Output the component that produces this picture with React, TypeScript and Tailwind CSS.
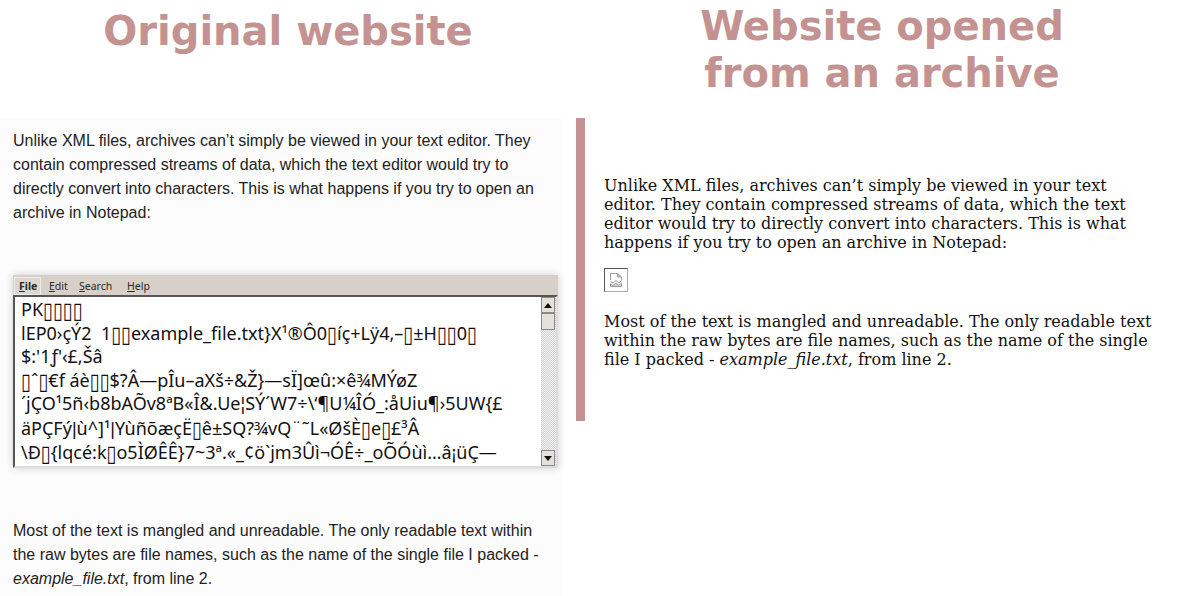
const SANS = { fontFamily: '"Liberation Sans", Arial, sans-serif' };
const TITLE = { fontFamily: '"DejaVu Sans", sans-serif' };

const NOTEPAD_LINES = [
  'PK\u25af\u25af\u25af\u25af',
  'lEP0\u203a\u00e7\u00dd2\u00a0\u00a01\u25af\u25afexample_file.txt}X\u00b9\u00ae\u00d40\u25af\u00ed\u00e7+L\u00ff4,\u2013\u25af\u00b1H\u25af\u25af0\u25af',
  '$:\'1\u0192\'\u2039\u00a3,\u0160\u00e2',
  '\u25af\u02c6\u25af\u20acf \u00e1\u00e8\u25af\u25af$?\u00c2\u2014p\u00ceu\u2013aX\u0161\u00f7&\u017d}\u2014s\u00cf]\u0153\u00fb:\u00d7\u00ea\u00beM\u00dd\u00f8Z',
  '\u00b4j\u00c7O\u00b95\u00f1\u2039b8bA\u00d5v8\u00aaB\u00ab\u00ce&.Ue\u00a6S\u00dd\u00b4W7\u00f7\\\u2018\u00b6U\u00bc\u00ce\u00d3_:\u00e5Uiu\u00b6\u203a5UW{\u00a3',
  '\u00e4P\u00c7F\u00fd|\u00f9^]\u00b9|Y\u00f9\u00f1\u00f5\u00e6\u00e7\u00cb\u25af\u00ea\u00b1SQ?\u00bevQ\u00a8\u02dcL\u00ab\u00d8\u0161\u00c8\u25afe\u25af\u00a3\u00b3\u00c2',
  '\\\u00d0\u25af{lqc\u00e9:k\u25afo5\u00cc\u00d8\u00ca\u00ca}7~3\u00aa.\u00ab_\u00a2\u00f6`jm3\u00db\u00ec\u00ac\u00d3\u00ca\u00f7_o\u00d5\u00d3\u00f9\u00ec\u2026\u00e2\u00a1\u00fc\u00c7\u2014',
];

// the missing-glyph boxes and the bars are too wide in Noto Sans, so they get their own font
function NotepadLine({ text }: { text: string }) {
  const parts = text.split(/([\u25af|\u00a6])/);
  return (
    <div>
      {parts.map((part, i) => {
        if (part === '\u25af') {
          return (
            <span key={i} className="inline-block origin-bottom scale-y-125 text-[18px] leading-[0]" style={TITLE}>
              {part}
            </span>
          );
        }
        if (part === '|' || part === '\u00a6') {
          return (
            <span key={i} style={SANS}>
              {part}
            </span>
          );
        }
        return <span key={i}>{part}</span>;
      })}
    </div>
  );
}

function ScrollArrow({ up }: { up?: boolean }) {
  return (
    <div className="flex h-[16px] w-[14px] items-center justify-center border border-[#8a8a8a] bg-[#e4e0da]">
      <svg width="8" height="5" viewBox="0 0 8 5">
        <path d={up ? 'M0 5 L4 0 L8 5 Z' : 'M0 0 L8 0 L4 5 Z'} fill="#111" />
      </svg>
    </div>
  );
}

function MenuItem({ label, className }: { label: string; className?: string }) {
  return (
    <span className={className}>
      <span className="underline underline-offset-1">{label[0]}</span>
      {label.slice(1)}
    </span>
  );
}

function Notepad() {
  return (
    <div className="ml-[13px] w-[545px] shadow-[0_0_8px_rgba(0,0,0,0.18)]">
      <div className="flex h-[20px] items-end bg-[#d6d0c9] pl-[1px] text-[10.5px] leading-[18px] text-[#2a2a2a]" style={{ fontFamily: '"Noto Sans", sans-serif' }}>
        <MenuItem label="File" className="h-[18px] w-[27px] border border-[#efece8] bg-[#dcd7d0] pl-[4px] font-bold leading-[16px]" />
        <MenuItem label="Edit" className="ml-[8px] h-[18px] w-[30px]" />
        <MenuItem label="Search" className="h-[18px] w-[48px]" />
        <MenuItem label="Help" className="h-[18px]" />
      </div>
      <div className="flex h-[173px] border-2 border-[#555] border-r-[#ddd] border-b-[#ddd] bg-white">
        <div className="flex-1 overflow-hidden pt-[1px] pl-[6px] text-[18px] leading-[23.5px] whitespace-nowrap text-[#111]" style={{ fontFamily: '"Noto Sans", "DejaVu Sans", sans-serif' }}>
          {NOTEPAD_LINES.map((line) => (
            <NotepadLine key={line} text={line} />
          ))}
        </div>
        <div className="flex w-[15px] flex-col bg-[repeating-conic-gradient(#d2d2d2_0_25%,#f4f4f4_0_50%)] bg-[length:2px_2px]">
          <ScrollArrow up />
          <div className="h-[17px] w-[14px] border border-[#8a8a8a] bg-[#e4e0da]" />
          <div className="flex-1" />
          <ScrollArrow />
        </div>
      </div>
    </div>
  );
}

function BrokenImage() {
  return (
    <div className="flex h-[24px] w-[24px] items-center justify-center border border-t-[#555] border-r-[#aaa] border-b-[#aaa] border-l-[#555]">
      <svg width="14" height="16" viewBox="0 0 14 16" fill="none" stroke="#a0a0a0" strokeWidth="1">
        <path d="M1.5 8 V1.5 H8.5 L12.5 5 V8" />
        <path d="M8.5 1.5 V5 H12.5" fill="#b8b8b8" />
        <path d="M1.5 9.5 L4 11 L7 8.5 L10 11 L12.5 8.5" />
        <path d="M1.5 12 L4 13.5 L7 11 L10 13.5 L12.5 11 V14.5 H1.5 Z" fill="#d0d0d0" />
      </svg>
    </div>
  );
}

export default function App() {
  return (
    <div className="flex h-[596px] w-[1200px] overflow-hidden bg-white">
      <div className="w-[576px] shrink-0">
        <h1 className="h-[118px] pt-[8px] text-center text-[40px] leading-[47px] font-bold text-[#c49391]" style={TITLE}>
          Original website
        </h1>
        <div className="h-[478px] w-[563px] bg-[#fcfcfc] text-[16px] leading-[24px] text-[#222]" style={SANS}>
          <p className="px-[13px] pt-[11px]">
            Unlike XML files, archives can’t simply be viewed in your text editor. They contain compressed streams of data, which the text editor would try to directly convert into characters. This is what happens if you try to open an archive in Notepad:
          </p>
          <div className="mt-[50px]">
            <Notepad />
          </div>
          <p className="mt-[51px] px-[13px]">
            Most of the text is mangled and unreadable. The only readable text within the raw bytes are file names, such as the name of the single file I packed - <em>example_file.txt</em>, from line 2.
          </p>
        </div>
      </div>
      <div className="flex-1">
        <h1 className="h-[118px] pt-[3px] pr-[12px] text-center text-[40px] leading-[47px] font-bold text-[#c49391]" style={TITLE}>
          Website opened
          <br />
          from an archive
        </h1>
        <div className="h-[303px] border-l-[9px] border-[#c49391] pt-[58px] pr-[40px] pl-[19px] text-[16px] leading-[19px] text-[#111]" style={{ fontFamily: '"DejaVu Serif", serif' }}>
          <p>
            Unlike XML files, archives can’t simply be viewed in your text editor. They contain compressed streams of data, which the text editor would try to directly convert into characters. This is what happens if you try to open an archive in Notepad:
          </p>
          <div className="mt-[16px]">
            <BrokenImage />
          </div>
          <p className="mt-[20px]">
            Most of the text is mangled and unreadable. The only readable text within the raw bytes are file names, such as the name of the single file I packed - <em>example_file.txt</em>, from line 2.
          </p>
        </div>
      </div>
    </div>
  );
}
